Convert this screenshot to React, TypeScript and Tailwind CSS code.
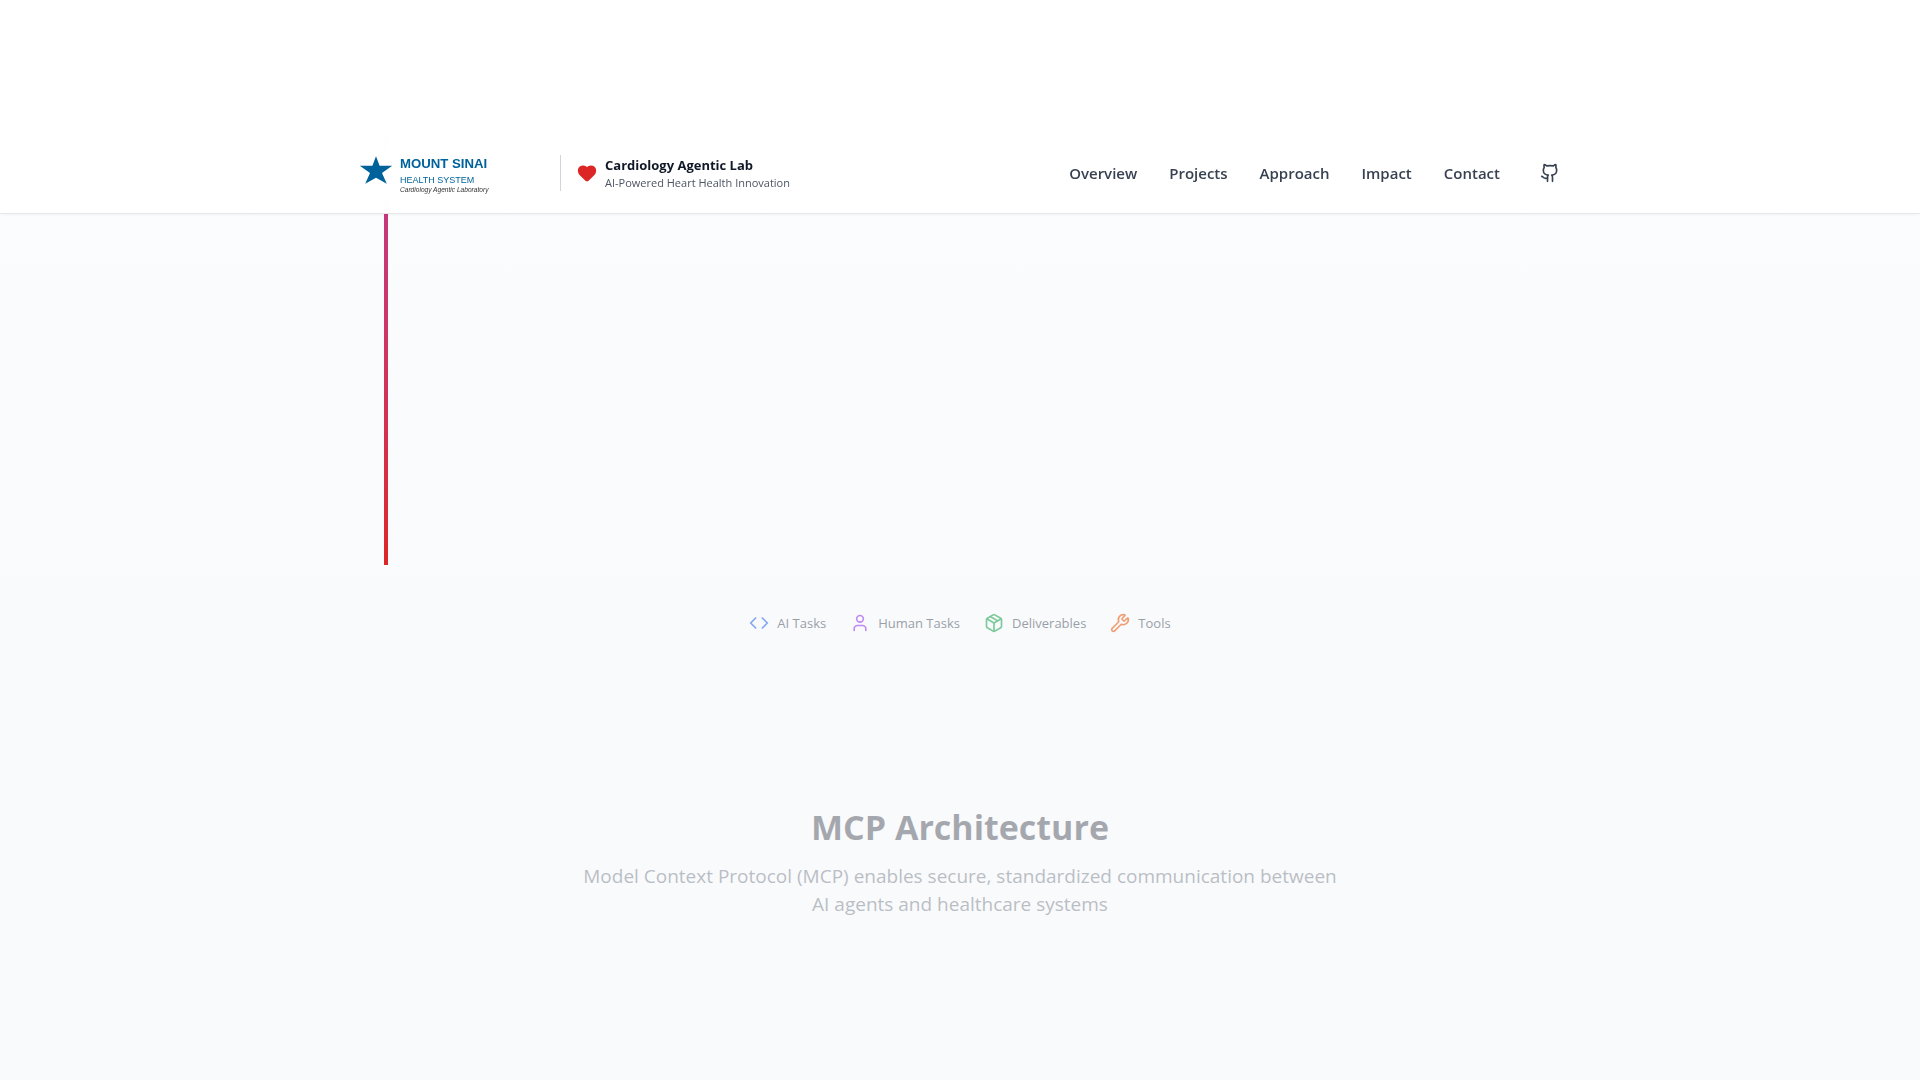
import { Code, Github, Heart, Package, User, Wrench } from "lucide-react";

const links = ["Overview", "Projects", "Approach", "Impact", "Contact"];

const legend = [
  { label: "AI Tasks", Icon: Code, color: "text-[#2563eb]" },
  { label: "Human Tasks", Icon: User, color: "text-[#9333ea]" },
  { label: "Deliverables", Icon: Package, color: "text-[#16a34a]" },
  { label: "Tools", Icon: Wrench, color: "text-[#ea580c]" },
];

function Logo() {
  return (
    <svg viewBox="0 0 320 80" className="h-12 w-48" role="img" aria-label="Mount Sinai Health System">
      <polygon
        points="40,12 46,28 67,28 50,40 58,58 40,48 22,58 30,40 13,28 34,28"
        fill="#00629b"
      />
      <g fontFamily="'Liberation Sans', Arial, sans-serif">
        <text x="80" y="32" fontSize="22" fontWeight="700" fill="#00629b">
          MOUNT SINAI
        </text>
        <text x="80" y="57" fontSize="15" fill="#00629b">
          HEALTH SYSTEM
        </text>
        <text x="80" y="71" fontSize="11" fontStyle="italic" fill="#333333">
          Cardiology Agentic Laboratory
        </text>
      </g>
    </svg>
  );
}

function Header() {
  return (
    <header className="relative z-10 border-b border-[#e5e7eb] bg-white/98 shadow-[0_2px_3px_-1px_rgb(0_0_0/0.04)] backdrop-blur-md">
      <div className="mx-auto flex h-20 max-w-7xl items-center justify-between px-8">
        <div className="flex items-center gap-4">
          <Logo />
          <div className="flex items-center gap-2 border-l border-[#d1d5db] pl-4">
            <Heart className="size-5 fill-[#dc2626] text-[#dc2626]" strokeWidth={2} />
            <div>
              <p className="text-[13px] leading-5 font-bold text-[#111827]">Cardiology Agentic Lab</p>
              <p className="text-[11px] leading-4 text-[#4b5563]">AI-Powered Heart Health Innovation</p>
            </div>
          </div>
        </div>
        <nav className="flex items-center gap-8">
          {links.map((label) => (
            <a key={label} href={`#${label.toLowerCase()}`} className="text-[15px] leading-6 font-semibold text-[#374151]">
              {label}
            </a>
          ))}
          <a href="#github" aria-label="GitHub" className="p-2 text-[#374151]">
            <Github className="size-5" />
          </a>
        </nav>
      </div>
    </header>
  );
}

export default function App() {
  return (
    <div className="flex min-h-screen flex-col bg-white pt-[133px] font-['Open_Sans',sans-serif]">
      <Header />
      <main className="-mt-[81px] grow bg-[#f9fafc]">
        <section className="bg-linear-to-b from-[#fbfcfc] to-[#f9fafc]">
          <div className="mx-auto max-w-7xl px-8">
            <div className="ml-8 h-[432px] w-1 bg-linear-to-b from-[#c0398c] to-[#dc2626]" />
            <ul className="flex justify-center gap-6 pt-12 opacity-55">
              {legend.map(({ label, Icon, color }) => (
                <li key={label} className="flex items-center gap-2">
                  <Icon className={`size-5 ${color}`} />
                  <span className="text-[13px] leading-5 text-[#4b5563]">{label}</span>
                </li>
              ))}
            </ul>
          </div>
        </section>
        <section className="mx-auto max-w-7xl px-8 pt-[174px] pb-24 text-center">
          <h2 className="text-[34px] leading-10 font-bold text-[#111827] opacity-36">MCP Architecture</h2>
          <p className="mx-auto mt-[15px] max-w-3xl text-[19px] leading-7 text-[#4b5563] opacity-36">
            Model Context Protocol (MCP) enables secure, standardized communication between AI agents and
            healthcare systems
          </p>
        </section>
      </main>
    </div>
  );
}
